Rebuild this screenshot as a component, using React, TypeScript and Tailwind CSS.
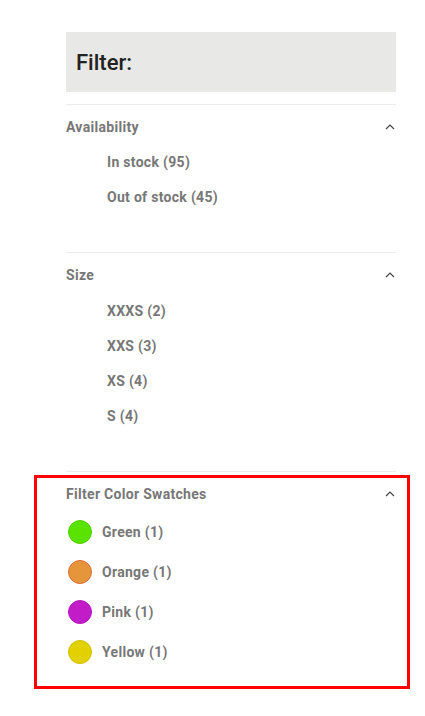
import React from "react";

const Chevron = () => (
  <svg width="10" height="6" viewBox="0 0 10 6" className="text-[#444]">
    <path d="M1 5 L5 1 L9 5" fill="none" stroke="currentColor" strokeWidth="1.2" />
  </svg>
);

const Section = ({ title, children, pb }: { title: string; children: React.ReactNode; pb: string }) => (
  <div className={`border-t border-[#ececec] ${pb}`}>
    <div className="flex items-center justify-between pt-[12px] h-[32px]">
      <span className="text-[14px] leading-[20px] font-bold tracking-[0.3px] text-[#777]">{title}</span>
      <span className="mr-[1px]"><Chevron /></span>
    </div>
    {children}
  </div>
);

const swatches = [
  { name: "Green (1)", color: "#5ae200", border: "#52d000" },
  { name: "Orange (1)", color: "#e5963a", border: "#d8703a" },
  { name: "Pink (1)", color: "#c21cc9", border: "#b41abc" },
  { name: "Yellow (1)", color: "#e2d000", border: "#d0bf00" },
];

export default function App() {
  return (
    <div className="relative w-[425px] h-[716px] bg-white" style={{ fontFamily: "Roboto, 'Liberation Sans', sans-serif" }}>
      <div className="ml-[66px] w-[330px] pt-[32px]">
        <div className="h-[60px] bg-[#e8e8e6] flex items-center pl-[10px]">
          <span className="text-[22px] font-medium text-[#222]">Filter:</span>
        </div>
        <div className="mt-[12px]">
          <Section title="Availability" pb="pb-[37px]">
            <div className="mt-[8px] pl-[41px]">
              {["In stock (95)", "Out of stock (45)"].map((t) => (
                <div key={t} className="h-[35px] flex items-center text-[14px] font-bold tracking-[0.3px] text-[#777]">{t}</div>
              ))}
            </div>
          </Section>
          <Section title="Size" pb="pb-[37px]">
            <div className="mt-[9px] pl-[41px]">
              {["XXXS (2)", "XXS (3)", "XS (4)", "S (4)"].map((t) => (
                <div key={t} className="h-[35px] flex items-center text-[14px] font-bold tracking-[0.3px] text-[#777]">{t}</div>
              ))}
            </div>
          </Section>
          <Section title="Filter Color Swatches" pb="pb-[20px]">
            <div className="mt-[8px] pl-[2px]">
              {swatches.map((s) => (
                <div key={s.name} className="h-[40px] flex items-center">
                  <span
                    className="w-[24px] h-[24px] rounded-full border"
                    style={{ backgroundColor: s.color, borderColor: s.border }}
                  />
                  <span className="ml-[10px] text-[14px] font-bold tracking-[0.3px] text-[#777]">{s.name}</span>
                </div>
              ))}
            </div>
          </Section>
        </div>
      </div>
      <div className="absolute left-[34px] top-[475px] w-[376px] h-[214px] border-[3px] border-[#ff0000] pointer-events-none" />
    </div>
  );
}
